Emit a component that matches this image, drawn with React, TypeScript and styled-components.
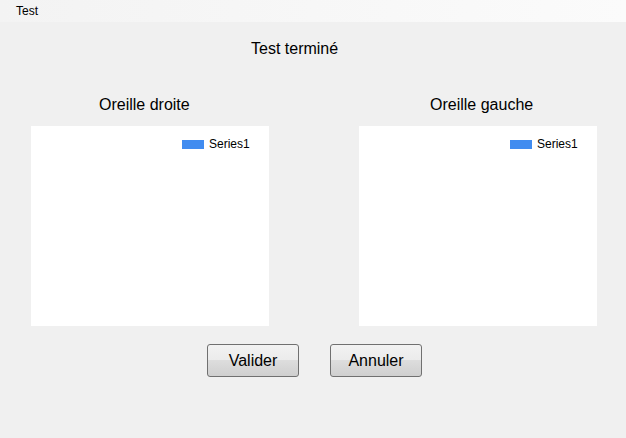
import React from 'react'
import styled, { createGlobalStyle } from 'styled-components'

const GlobalStyle = createGlobalStyle`
  html, body {
    margin: 0;
    padding: 0;
    background: #f0f0f0;
  }
  body {
    font-family: "Liberation Sans", Arial, sans-serif;
  }
`;

const Window = styled.div`
  width: 626px;
  height: 438px;
  background: #f0f0f0;
  display: flex;
  flex-direction: column;
  overflow: hidden;
`;

const MenuBar = styled.div`
  height: 22px;
  display: flex;
  align-items: center;
  padding-left: 16px;
  background: linear-gradient(to right, #f3f3f3, #fbfbfb);
  font-size: 12px;
  color: #000;
`;

const Title = styled.div`
  margin: 17px 0 0 251px;
  font-size: 16px;
  line-height: 19px;
  color: #000;
`;

const ChartsRow = styled.div`
  display: flex;
  gap: 90px;
  padding-left: 31px;
  margin-top: 37px;
`;

const ChartColumn = styled.div`
  display: flex;
  flex-direction: column;
`;

const ChartLabel = styled.div<{ $offset: number }>`
  margin-left: ${p => p.$offset}px;
  font-size: 16px;
  line-height: 19px;
  height: 19px;
  color: #000;
`;

const ChartArea = styled.div`
  margin-top: 12px;
  width: 238px;
  height: 200px;
  background: #fff;
  display: flex;
  flex-direction: column;
`;

const Legend = styled.div`
  display: flex;
  align-items: center;
  gap: 5px;
  margin: 11px 0 0 151px;
  font-size: 12px;
  line-height: 14px;
  color: #000;
`;

const Swatch = styled.span`
  width: 22px;
  height: 9px;
  background: #418cf0;
`;

const ButtonRow = styled.div`
  display: flex;
  gap: 31px;
  padding-left: 207px;
  margin-top: 18px;
`;

const Button = styled.button`
  width: 92px;
  height: 33px;
  border: 1px solid #707070;
  border-radius: 3px;
  background: linear-gradient(to bottom, #f2f2f2 0%, #ebebeb 50%, #dddddd 50%, #cfcfcf 100%);
  font-family: "Liberation Sans", Arial, sans-serif;
  font-size: 16px;
  color: #000;
  padding: 0;
  cursor: pointer;
`;

const charts = [
  { label: 'Oreille droite', offset: 68 },
  { label: 'Oreille gauche', offset: 71 },
]

const App: React.FC = () => {
  return (
    <>
      <GlobalStyle />
      <Window>
        <MenuBar>Test</MenuBar>
        <Title>Test terminé</Title>

        <ChartsRow>
          {charts.map(c => (
            <ChartColumn key={c.label}>
              <ChartLabel $offset={c.offset}>{c.label}</ChartLabel>
              <ChartArea>
                <Legend>
                  <Swatch />
                  Series1
                </Legend>
              </ChartArea>
            </ChartColumn>
          ))}
        </ChartsRow>

        <ButtonRow>
          <Button>Valider</Button>
          <Button>Annuler</Button>
        </ButtonRow>
      </Window>
    </>
  )
}

export default App
